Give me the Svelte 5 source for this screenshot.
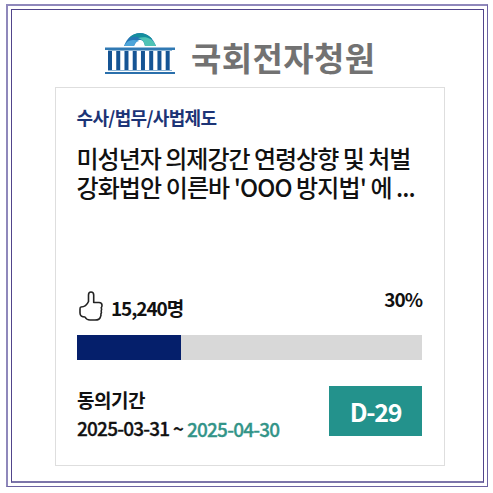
<script>
  const petition = {
    category: '수사/법무/사법제도',
    title: ["미성년자 의제강간 연령상향 및 처벌", "강화법안 이른바 'OOO 방지법' 에 ..."],
    count: 15240,
    percent: 30,
    start: '2025-03-31',
    end: '2025-04-30',
    left: 29,
  };
  const columns = [0, 1, 2, 3, 4, 5, 6, 7];
</script>

<div class="frame">
  <main class="inner">
    <header class="brand">
      <svg class="logo" viewBox="0 0 70 42" width="70" height="42" aria-hidden="true">
        <path d="M19 13C22 5 28 0 35 0s13 5 16 13H40c-1-4-2-6-5-6s-4 2-6 6z" fill="#2676b4" />
        <path d="M19 13c2-4 5-6 9-6 2 0 4 0 6 1-3 1-4 2-5 5z" fill="#4da5da" />
        <path d="M24 5C29-1 41-2 47 6l-7 3C37 5 32 2 24 5z" fill="#148e9d" />
        <path d="M33 5c8-2 15 0 18 8H40c-1-4-2-6-7-8z" fill="#4fc3b5" />
        <path d="M0 14.500h70v2.500H0z" fill="#3079b3" />
        {#each columns as i}
          <rect x={3 + i * 8.24} y="18" width="4" height="19.500" fill="#155494" />
        {/each}
        <path d="M3 17h64v1H3zM3 37h64v1H3z" fill="#8db5d6" />
        <path d="M0 39h70v2H0z" fill="#2a6fab" />
      </svg>
      <h1>국회전자청원</h1>
    </header>

    <article class="card">
      <div class="category">{petition.category}</div>
      <h2 class="title">
        {#each petition.title as line}
          <span>{line}</span>
        {/each}
      </h2>

      <div class="stats">
        <div class="agree">
          <svg viewBox="0 0 26 31" width="26" height="31" aria-hidden="true">
            <path d="M3 16c3 0 6-2 7.500-5.500V4c0-2 1-3 2.500-3s2.700 1 2.700 3v7.500H21c2 0 3 1 3 2.700 0 1-.3 2-.8 2.500.6 1 .6 2 0 3.300.4 1 .4 2-.3 3 .3 1 0 2-.5 3C22 28 20 29 17 29h-5c-3 0-4-1-5-3-3 0-5-1-5-4v-4c0-1 0-2 1-2z" />
          </svg>
          <span class="count">{petition.count.toLocaleString('en-US')}명</span>
        </div>
        <span class="percent">{petition.percent}%</span>
      </div>

      <div class="bar">
        <div class="fill" style="width: {petition.percent}%"></div>
      </div>

      <footer class="bottom">
        <div class="period">
          <div>동의기간</div>
          <div class="dates">{petition.start} <span class="tilde">~</span> <span class="end">{petition.end}</span></div>
        </div>
        <div class="dday">D-{petition.left}</div>
      </footer>
    </article>
  </main>
</div>

<style>
  :global(body) { background: #fff; }
  .frame, .inner, .card, .dday { box-sizing: border-box; }
  .frame {
    width: 482px; height: 483px; margin: 4px 0 0 6px;
    border: 1px solid #6a61a0; border-left: 2px solid #8f88bb; border-top: 2px solid #8f88bb;
    padding: 3px;
    font-family: "Noto Sans CJK KR", sans-serif; color: #111;
    display: flow-root;
  }
  .inner {
    width: 473px; height: 474px;
    border: 1px solid #51458b; border-bottom: 2px solid #7c75a9;
    display: flow-root;
  }
  .brand { display: flex; height: 77px; padding-left: 93px; }
  .logo { margin-top: 23px; flex-shrink: 0; }
  h1 {
    margin: 23px 0 0 16px; font-size: 33px; line-height: 48px; font-weight: 700;
    letter-spacing: .4px; color: #727272; white-space: nowrap;
  }
  .card {
    width: 390px; height: 379px; margin-left: 43px; padding: 15px 22px 0 21px;
    border: 1px solid #dedede;
  }
  .category { font-size: 18px; line-height: 28px; font-weight: 700; letter-spacing: -.65px; color: #1c3476; margin-left: -.5px; }
  .title { margin: 12px 0 0 -.5px; font-size: 24px; line-height: 29px; font-weight: 500; letter-spacing: -1px; height: 144px; }
  .title span { display: block; white-space: nowrap; }
  .title span + span { letter-spacing: -.9px; }
  .stats { display: flex; justify-content: space-between; height: 48px; }
  .agree { display: flex; gap: 7px; }
  .agree svg { margin: 4px 0 0 1px; fill: none; stroke: #222; stroke-width: 1.6; stroke-linejoin: round; }
  .count, .percent { font-size: 19px; line-height: 28px; font-weight: 700; letter-spacing: -1.1px; }
  .count { margin-top: 7px; }
  .percent { margin-top: -2px; letter-spacing: -1px; }
  .bar { height: 25px; background: #d8d8d8; }
  .fill { height: 100%; background: #051f6b; }
  .bottom { display: flex; justify-content: space-between; margin-top: 26px; }
  .period { font-size: 19px; line-height: 28px; font-weight: 700; letter-spacing: -.5px; white-space: nowrap; }
  .dates { letter-spacing: -.78px; font-weight: 500; -webkit-text-stroke: .3px currentColor; }
  .end { color: #329488; position: relative; top: 1px; margin-left: .5px; }
  .dday {
    width: 93px; height: 50px; background: #23928c; color: #fff;
    font-size: 25px; line-height: 50px; font-weight: 700; letter-spacing: -1.3px; text-align: center;
  }
</style>
